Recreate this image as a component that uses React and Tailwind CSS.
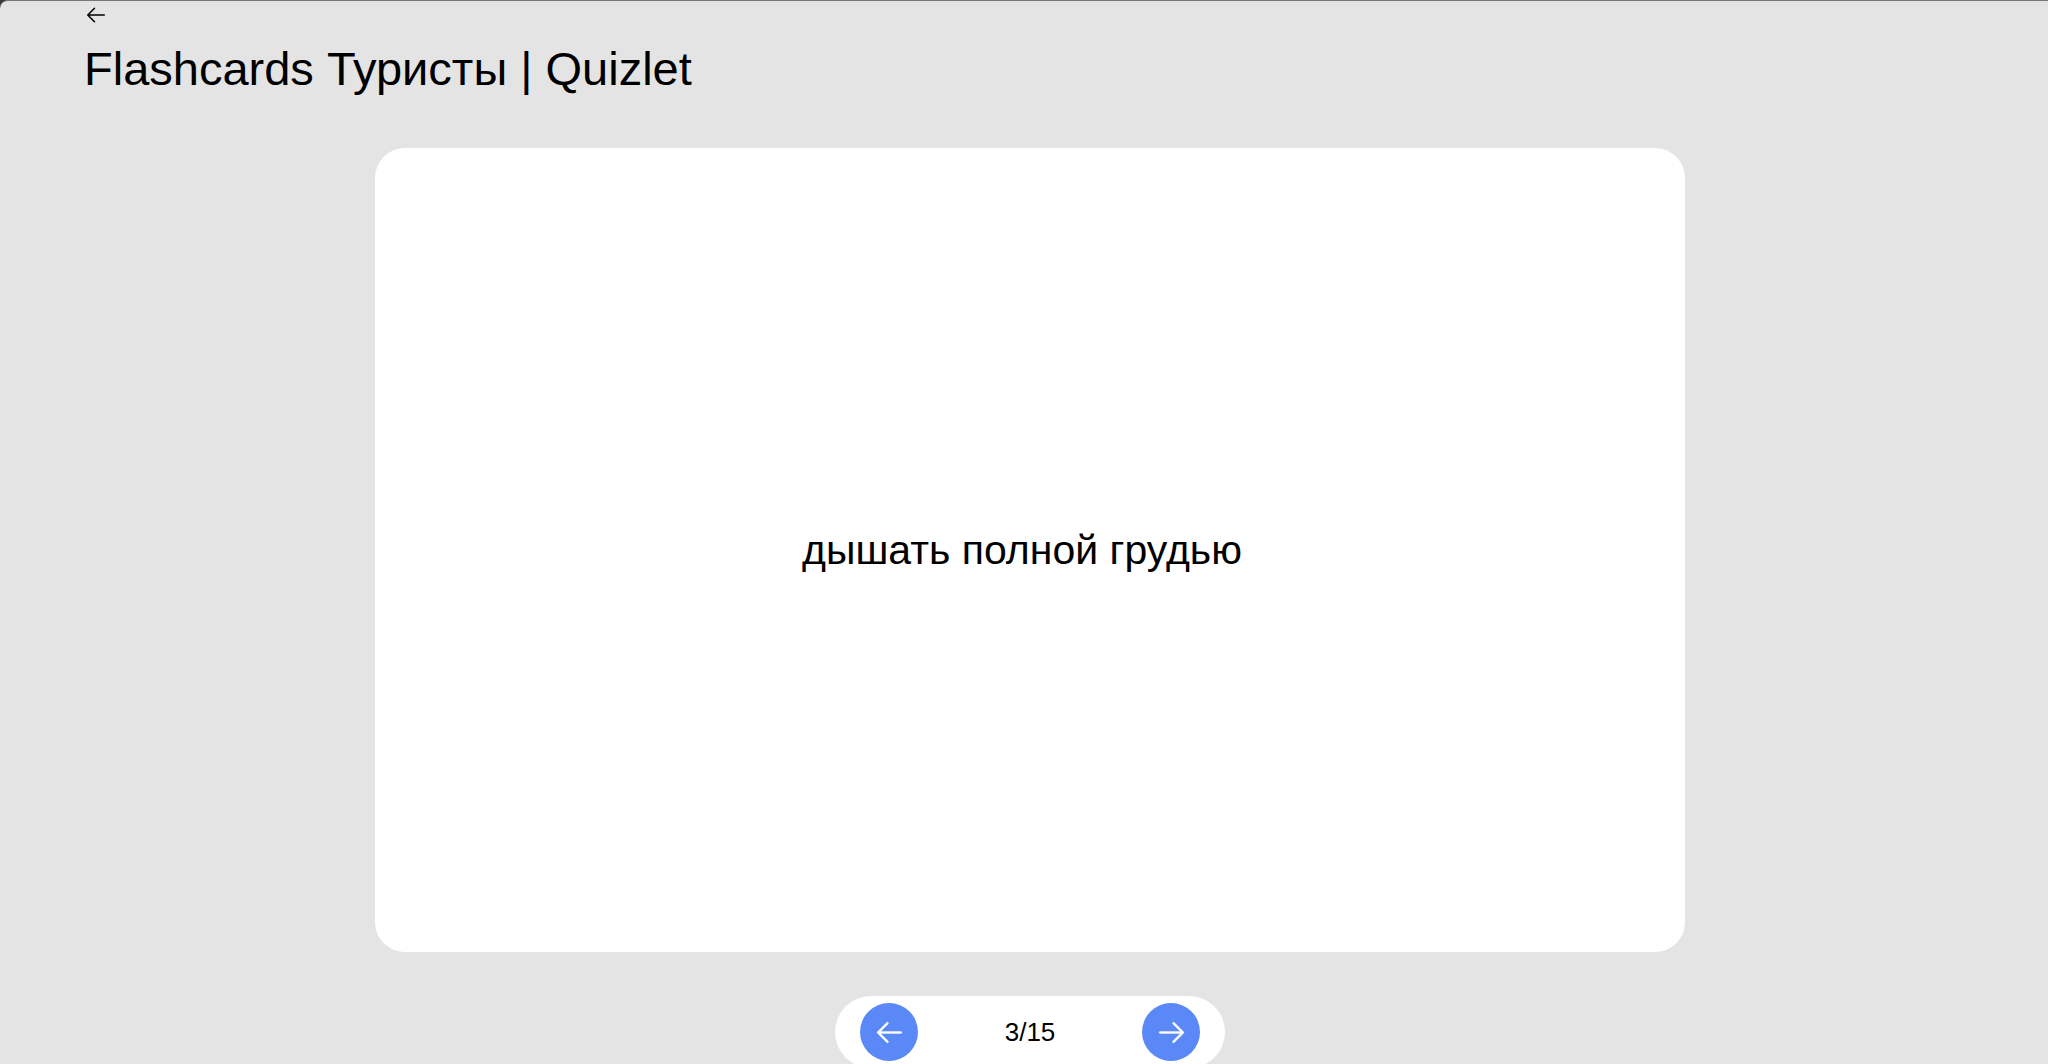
import { useState } from 'react';
import { PiArrowLeft, PiArrowRight } from 'react-icons/pi';

const TOTAL = 15;

const cards = {
    3: 'дышать полной грудью',
};

const App = () => {
    const [current, setCurrent] = useState(3);

    const prev = () => setCurrent(value => Math.max(1, value - 1));
    const next = () => setCurrent(value => Math.min(TOTAL, value + 1));

    return (
        <div className="h-screen overflow-hidden bg-[#39373a] font-['Liberation_Sans',Arial,sans-serif] text-black">
            <div className="min-h-full rounded-tl-lg border-t border-[#777577] bg-[#e4e4e4] pl-[84px] pr-[72px]">
                <header>
                    <a href="#" aria-label="Back" className="flex h-[30px] w-6 items-center pb-[2px]">
                        <PiArrowLeft className="size-6" />
                    </a>
                    <h1 className="mt-2 text-[47px] leading-[60px]">Flashcards Туристы | Quizlet</h1>
                </header>

                <main className="flex flex-col items-center">
                    <button
                        type="button"
                        className="mt-[49px] flex h-[804px] w-full max-w-[1310px] items-center justify-center rounded-[30px] bg-white pr-4 text-[41px] leading-[48px]"
                    >
                        {cards[current]}
                    </button>

                    <div className="mt-11 flex h-[72px] w-[390px] items-center justify-between rounded-full bg-white px-[25px]">
                        <button
                            type="button"
                            aria-label="Previous card"
                            onClick={prev}
                            className="flex size-[58px] items-center justify-center rounded-full bg-[#5a88f6] text-white"
                        >
                            <PiArrowLeft className="size-[33px] stroke-[3px]" />
                        </button>
                        <p className="text-[26px] leading-8">{current}/{TOTAL}</p>
                        <button
                            type="button"
                            aria-label="Next card"
                            onClick={next}
                            className="flex size-[58px] items-center justify-center rounded-full bg-[#5a88f6] text-white"
                        >
                            <PiArrowRight className="size-[33px] stroke-[3px]" />
                        </button>
                    </div>
                </main>
            </div>
        </div>
    );
};

export default App;
